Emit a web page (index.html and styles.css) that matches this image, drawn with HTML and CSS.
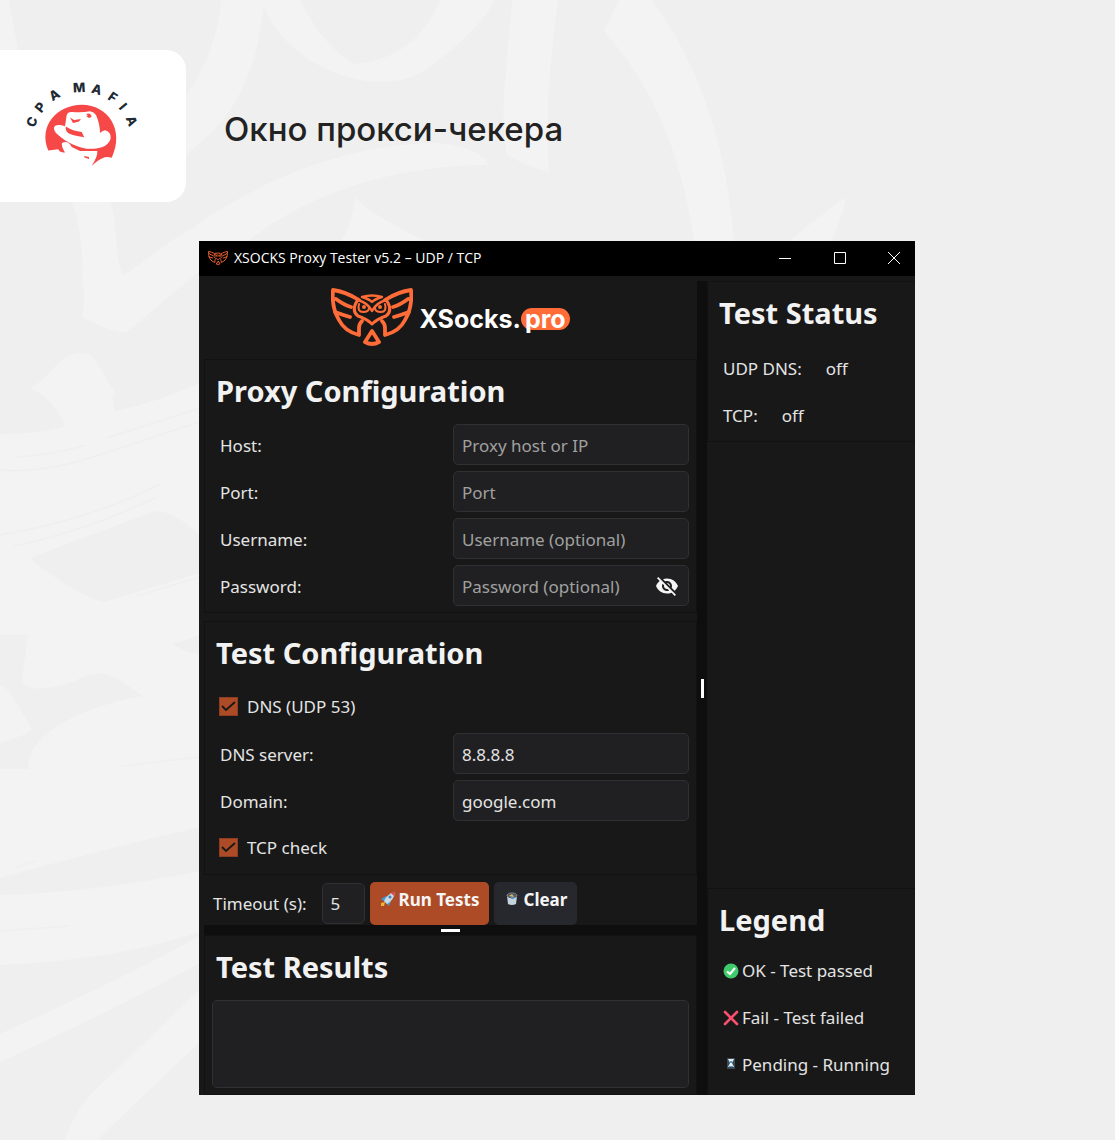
FILE: index.html
```html
<!DOCTYPE html>
<html lang="ru">
<head>
    <meta charset="UTF-8">
    <meta name="viewport" content="width=device-width, initial-scale=1.0">
    <title>Окно прокси-чекера</title>
    <link rel="stylesheet" href="styles.css">
</head>
<body>

    <svg class="backdrop" viewBox="0 0 1115 1140" preserveAspectRatio="xMinYMin slice" aria-hidden="true">
        <g fill="#f3f3f3">
            <path d="M0 0H9L18 50H0Z"/>
            <path d="M221 0H264C260 60 240 110 200 143L180 160V105C205 68 218 40 221 0Z"/>
            <path d="M264 7C280 50 330 78 375 82C395 82 412 79 425 70C455 50 485 20 495 0H440C425 35 400 60 355 64C335 54 315 30 300 0H262Z"/>
            <path d="M512 0H558C550 60 545 120 549 172Q535 170 507 155C498 115 509 50 512 0Z"/>
            <path d="M619 0H652C700 65 728 150 734 245H695C680 150 655 90 604 31Z"/>
            <path d="M196 225C270 175 350 145 433 143C460 144 482 152 489 165C400 165 310 190 243 245H196Z"/>
            <path d="M355 197Q370 215 433 245H339Q354 220 355 197Z"/>
            <path d="M845 199Q845 210 830 245H784Q815 220 842 199Z"/>
            <path d="M72 200H110C118 225 114 255 123 275C130 273 165 242 200 224V271L128 331Q120 336 82 317Q86 300 82 280C85 255 78 220 72 200Z"/>
            <path d="M32 387Q40 383 47 375Q72 345 92 356C103 368 108 385 116 393L113 397L115 411Q155 403 200 383V827Q100 850 0 878V769H28C28 730 90 705 143 696C110 672 100 668 75 681C55 687 28 695 22 680L28 635H0V434Q40 434 65 426Q50 395 32 390Z"/>
            <path d="M0 686Q10 689 13 697L32 729Q30 734 0 743Z"/>
            <path d="M0 895Q100 892 200 871V932Q110 961 0 965Z"/>
            <path d="M0 1034Q120 980 200 936V963Q110 1012 0 1062Z"/>
            <path d="M65 1140Q75 1105 110 1076L200 989V1042L97 1140Z"/>
        </g>
        <g fill="#efefef">
            <path d="M32 557L155 511Q175 511 200 536V573L105 602Q80 598 32 560Z"/>
            <path d="M173 644L200 635V654Q185 653 173 644Z"/>
        </g>
        <g fill="none" stroke="#efefef" stroke-width="1.5">
            <path d="M0 470C60 475 110 450 200 422M107 438L200 408M0 535Q90 520 160 484M14 546Q90 530 157 497M137 596L200 577M15 457Q55 455 85 445M122 766L200 757M0 931L70 926M17 867L35 861"/>
        </g>
    </svg>

    <header class="page-header">
        <div class="brand">
            <svg class="brand-logo" viewBox="0 0 116 90" role="img" aria-label="CPA Mafia">
                <g class="brand-arc">
                    <text x="58" y="12" transform="rotate(-69 58 61)">C</text>
                    <text x="58" y="12" transform="rotate(-51 58 61)">P</text>
                    <text x="58" y="12" transform="rotate(-31 58 61)">A</text>
                    <text x="58" y="12" transform="rotate(-3 58 61)">M</text>
                    <text x="58" y="12" transform="rotate(16 58 61)">A</text>
                    <text x="58" y="12" transform="rotate(35 58 61)">F</text>
                    <text x="58" y="12" transform="rotate(50 58 61)">I</text>
                    <text x="58" y="12" transform="rotate(68 58 61)">A</text>
                </g>
                <path fill="#f74848" d="M24.300 70.500C14 46 33 24.700 58 24.700C84 24.700 101 50 87.700 77.700Q82 76 79 78Q75 79 67.700 86Q74 76 73.300 71L56 71L47.700 67Q44 60 38 63Q37 66 41 72.500Q36 73 34.300 69.300Z"/>
                <path fill="#fff" d="M41 46.300L42.700 35Q44 31.500 48 32Q58 33 66 31.300Q70 32 72 35Q76 44 76 53Q78 51 81 50.300Q87 52 86.700 58C85 67 74 69.500 62.700 68.700C50 67 38 59 32 53C27 46 32 43 41 46.300Z"/>
                <path fill="#f74848" d="M41.700 46.500Q49 51 57.700 52L60.300 57.300Q51 56 46 54Q41 52 41.700 46.500ZM46 37.500L50 40L57 39L55 41.500L49 43ZM62 34Q67 32 67.500 37L65 38L62 36L64 35.500ZM60 76L65 77V79L60.500 77.500Z"/>
            </svg>
        </div>
        <h1>Окно прокси-чекера</h1>
    </header>

    <main class="window">
        <div class="titlebar">
            <svg class="titlebar-icon" viewBox="0 0 82 58" aria-hidden="true"><use href="#owl"/></svg>
            <span class="titlebar-text">XSOCKS Proxy Tester v5.2 – UDP / TCP</span>
            <button type="button" class="win-btn" aria-label="Minimize">
                <svg viewBox="0 0 14 14"><path d="M1 7.500H13"/></svg>
            </button>
            <button type="button" class="win-btn" aria-label="Maximize">
                <svg viewBox="0 0 14 14"><path d="M1.500 1.500H12.500V12.500H1.500Z"/></svg>
            </button>
            <button type="button" class="win-btn" aria-label="Close">
                <svg viewBox="0 0 14 14"><path d="M1 1L13 13M13 1L1 13"/></svg>
            </button>
        </div>

        <div class="panes">
            <div class="left">
                <div class="logo">
                    <svg class="owl" viewBox="0 0 82 58" aria-hidden="true">
                        <g id="owl" fill="none" stroke="#ff6c37" stroke-width="3.800" stroke-linecap="round" stroke-linejoin="round">
                            <path d="M28 12C20 7 10 3 2 2C1 13 3 24 8 32C12 40 20 45 28 47V40Q28 36 31 33M5 11Q13 17 20 19M4 24Q12 27 19 29"/>
                            <path d="M54 12C62 7 72 3 80 2C81 13 79 24 74 32C70 40 62 45 54 47V40Q54 36 51 33M77 11Q69 17 62 19M78 24Q70 27 63 29"/>
                            <path stroke-width="3" d="M26 13Q20 23 27 28Q36 31 41 36Q46 31 55 28Q62 23 56 13"/>
                            <path stroke-width="2.400" d="M27 12Q37 15 41 23Q45 15 55 12M31 9Q41 6 51 9Q44 11 41 14Q38 11 31 9Z"/>
                            <path stroke-width="2" d="M28 16Q26 24 32 24Q38 24 38 20M54 16Q56 24 50 24Q44 24 44 20"/>
                            <circle cx="33" cy="19" r="1" stroke-width="2"/>
                            <circle cx="49" cy="19" r="1" stroke-width="2"/>
                            <path d="M41 43L34 54Q41 58 48 54Z"/>
                        </g>
                    </svg>
                    <span class="logo-text">XSocks.<span class="pill">pro</span></span>
                </div>

                <section class="group">
                    <h2>Proxy Configuration</h2>
                    <div class="row">
                        <label for="host">Host:</label>
                        <input type="text" id="host" placeholder="Proxy host or IP">
                    </div>
                    <div class="row">
                        <label for="port">Port:</label>
                        <input type="text" id="port" placeholder="Port">
                    </div>
                    <div class="row">
                        <label for="username">Username:</label>
                        <input type="text" id="username" placeholder="Username (optional)">
                    </div>
                    <div class="row">
                        <label for="password">Password:</label>
                        <div class="password">
                            <input type="password" id="password" placeholder="Password (optional)">
                            <button type="button" class="eye" aria-label="Show password">
                                <svg viewBox="0 0 24 24"><path d="M12 7c2.760 0 5 2.240 5 5 0 .650-.130 1.260-.360 1.830l2.920 2.920c1.510-1.260 2.700-2.890 3.430-4.750-1.730-4.390-6-7.500-11-7.500-1.400 0-2.740.250-3.980.700l2.160 2.160C10.740 7.130 11.350 7 12 7zM2 4.270l2.280 2.280.460.460C3.080 8.300 1.780 10.020 1 12c1.730 4.390 6 7.500 11 7.500 1.550 0 3.030-.300 4.380-.840l.420.420L19.730 22 21 20.730 3.270 3 2 4.270zM7.530 9.800l1.550 1.550c-.050.210-.080.430-.080.650 0 1.660 1.340 3 3 3 .220 0 .440-.030.650-.080l1.550 1.550c-.670.330-1.410.530-2.200.530-2.760 0-5-2.240-5-5 0-.790.200-1.530.530-2.200zm4.310-.780l3.150 3.150.020-.160c0-1.660-1.340-3-3-3l-.170.010z"/></svg>
                            </button>
                        </div>
                    </div>
                </section>

                <section class="group test-config">
                    <h2>Test Configuration</h2>
                    <label class="check"><input type="checkbox" checked> DNS (UDP 53)</label>
                    <div class="row">
                        <label for="dnsServer">DNS server:</label>
                        <input type="text" id="dnsServer" value="8.8.8.8">
                    </div>
                    <div class="row">
                        <label for="domain">Domain:</label>
                        <input type="text" id="domain" value="google.com">
                    </div>
                    <label class="check"><input type="checkbox" checked> TCP check</label>
                </section>

                <div class="toolbar">
                    <label for="timeout">Timeout (s):</label>
                    <input type="text" id="timeout" value="5">
                    <button type="button" class="btn btn-run">
                        <svg viewBox="0 0 16 16">
                            <path fill="#f2b233" d="M1 12L5 11L4 15L1 15Z"/>
                            <path fill="#3d9ad6" d="M1 8L6 5L11 10L9 15L6 12L4 10Z"/>
                            <path fill="#c9dbe6" d="M4 10Q7 3 15 1Q14 9 7 13Z"/>
                            <path fill="#d8434e" d="M11 2L15 1L14 5Z"/>
                            <circle cx="10" cy="6" r="1.500" fill="#3d84bd"/>
                        </svg>
                        Run Tests
                    </button>
                    <button type="button" class="btn btn-clear">
                        <svg viewBox="0 0 16 16">
                            <path fill="#c6d3dc" d="M3 5H13L12 13Q8 15 4 13Z"/>
                            <ellipse cx="8" cy="5" rx="5" ry="2" fill="#56616b"/>
                            <path fill="#e0b64d" d="M5 5L8 3L10 6Z"/>
                            <path fill="#4a98cc" d="M7 6H10V8H7Z"/>
                            <path fill="none" stroke="#7e8d97" d="M3 5Q3 2 8 2T13 5"/>
                        </svg>
                        Clear
                    </button>
                </div>

                <div class="splitter splitter-h"></div>

                <section class="group results">
                    <h2>Test Results</h2>
                    <textarea aria-label="Test Results" readonly></textarea>
                </section>
            </div>

            <div class="splitter splitter-v"></div>

            <aside class="right">
                <section class="group">
                    <h2>Test Status</h2>
                    <p class="status"><span>UDP DNS:</span><span>off</span></p>
                    <p class="status"><span>TCP:</span><span>off</span></p>
                </section>
                <section class="group legend">
                    <h2>Legend</h2>
                    <ul>
                        <li>
                            <svg viewBox="0 0 16 16"><circle cx="8" cy="8" r="7.500" fill="#3fcb6c"/><path d="M4 8.500L7 11L12 5" fill="none" stroke="#fff" stroke-width="2.200"/></svg>
                            OK - Test passed
                        </li>
                        <li>
                            <svg viewBox="0 0 16 16"><path d="M2 2L14 14M14 2L2 14" stroke="#f8506e" stroke-width="2.600" stroke-linecap="round"/></svg>
                            Fail - Test failed
                        </li>
                        <li>
                            <svg viewBox="0 0 16 16"><path fill="#3c4852" d="M4 1H12V12H4Z"/><path fill="#e3edf3" d="M5 2H11L9 6L11 10H5L7 6Z"/><path fill="#4b9fd0" d="M7 4H9V6H7ZM6 9H10V10H6Z"/></svg>
                            Pending - Running
                        </li>
                    </ul>
                </section>
            </aside>
        </div>
    </main>

</body>
</html>
```
FILE: styles.css
```css
* {
    box-sizing: border-box;
}
body {
    margin: 0;
    padding: 50px 0 45px;
    background-color: #efefef;
    font-family: "Noto Sans", sans-serif;
}
.backdrop {
    position: absolute;
    top: 0;
    left: 0;
    width: 100%;
    height: 100%;
    z-index: -1;
}

/* Header */
.page-header {
    display: flex;
    align-items: center;
    gap: 38px;
    margin-bottom: 39px;
}
.brand {
    display: flex;
    justify-content: flex-end;
    width: 186px;
    padding: 30px 46px 32px 0;
    background-color: #fff;
    border-radius: 0 20px 20px 0;
}
.brand-logo {
    width: 116px;
    height: 90px;
    overflow: visible;
}
.brand-arc {
    font-family: Inter, sans-serif;
    font-size: 13px;
    font-weight: 800;
    fill: #1f2933;
    text-anchor: middle;
}
.page-header h1 {
    margin: 0;
    padding-top: 6px;
    font-family: Inter, sans-serif;
    font-size: 33px;
    font-weight: 500;
    line-height: 40px;
    color: #222;
}

/* Window */
.window {
    margin: 0 200px 0 199px;
    background-color: #181818;
    color: #e4e4e4;
    font-size: 17px;
}
.titlebar {
    display: flex;
    align-items: center;
    height: 35px;
    padding: 0 0 2px 9px;
    background-color: #000;
    color: #fff;
}
.titlebar-icon {
    width: 20px;
    height: 14px;
    margin-right: 6px;
}
.titlebar-text {
    flex: 1;
    font-family: "Open Sans", sans-serif;
    font-size: 14px;
}
.win-btn {
    display: flex;
    justify-content: center;
    width: 55px;
    padding: 0;
    border: 0;
    background: none;
}
.win-btn:last-child {
    width: 42px;
    margin-left: 6px;
}
.win-btn svg {
    width: 14px;
    height: 14px;
    fill: none;
    stroke: #fff;
}
.panes {
    display: grid;
    grid-template-columns: minmax(0, 1fr) 10px 208px;
    padding-top: 5px;
}
.left {
    display: flex;
    flex-direction: column;
    padding-left: 5px;
}

/* Logo */
.logo {
    display: flex;
    align-items: center;
    justify-content: center;
    gap: 6px;
    height: 78px;
    padding: 0 0 6px;
}
.owl {
    width: 82px;
    height: 58px;
}
.logo-text {
    display: flex;
    align-items: center;
    padding-top: 4px;
    font-family: Inter, sans-serif;
    font-size: 25px;
    font-weight: 700;
    line-height: 22px;
    color: #fff;
}
.pill {
    padding: 0 4px;
    border-radius: 11px;
    background-color: #ff6c37;
}

/* Groups and form rows */
.group {
    padding: 0 7px 6px;
    border: 1px solid #121212;
}
.group h2 {
    margin: 0;
    padding: 0 0 3px 4px;
    font-size: 29px;
    font-weight: 700;
    line-height: 61px;
    color: #f2f2f2;
}
.row {
    display: grid;
    grid-template-columns: minmax(0, 1fr) 236px;
    align-items: center;
    margin-bottom: 6px;
}
.row:last-child {
    margin-bottom: 0;
}
.row label {
    padding: 2px 0 0 8px;
}
input[type="text"],
input[type="password"],
textarea {
    width: 100%;
    height: 41px;
    padding: 2px 8px 0;
    border: 1px solid #303032;
    border-radius: 5px;
    background-color: #202022;
    color: #e4e4e4;
    font-family: inherit;
    font-size: 17px;
}
input::placeholder {
    color: #a0a0a0;
}
.password {
    position: relative;
}
.eye {
    position: absolute;
    top: 9px;
    right: 10px;
    width: 24px;
    height: 24px;
    padding: 0;
    border: 0;
    background: none;
}
.eye svg {
    display: block;
    fill: #f5f5f5;
}
.test-config {
    margin-top: 8px;
}
.check {
    display: flex;
    align-items: center;
    gap: 9px;
    height: 41px;
    margin-bottom: 6px;
    padding-left: 7px;
}
.check:last-child {
    margin-bottom: 0;
}
.check input {
    appearance: none;
    width: 19px;
    height: 19px;
    margin: 0;
    border: 1px solid #8d3e22;
    background: #ad4b27 url("data:image/svg+xml,%3Csvg xmlns='http://www.w3.org/2000/svg' viewBox='0 0 17 17'%3E%3Cpath d='M2 8l4 4 9-8' fill='none' stroke='%23181818' stroke-width='1.8'/%3E%3C/svg%3E");
}

/* Toolbar */
.toolbar {
    display: flex;
    align-items: center;
    gap: 5px;
    height: 44px;
    margin-top: 6px;
    padding-left: 9px;
}
.toolbar input[type="text"] {
    width: 43px;
    margin-left: 10px;
    padding-top: 0;
}
.btn {
    display: flex;
    align-items: center;
    gap: 3px;
    height: 43px;
    padding: 0 10px 8px;
    border: 0;
    border-radius: 5px;
    color: #f5f5f5;
    font-family: inherit;
    font-size: 17px;
    font-weight: 700;
}
.btn svg {
    width: 16px;
    height: 16px;
}
.btn-run {
    background-color: #ad4b27;
}
.btn-clear {
    background-color: #27282d;
}

/* Splitters */
.splitter {
    display: flex;
    align-items: center;
    justify-content: center;
    background-color: #0e0e0e;
}
.splitter::after {
    content: "";
    background-color: #fff;
}
.splitter-h {
    height: 10px;
}
.splitter-h::after {
    width: 19px;
    height: 3px;
}
.splitter-v::after {
    width: 3px;
    height: 19px;
}
.results {
    flex: 1;
}
.results textarea {
    display: block;
    height: 88px;
    resize: none;
}

/* Right pane */
.right {
    display: flex;
    flex-direction: column;
    justify-content: space-between;
}
.right .group {
    padding-bottom: 2px;
    border-right: 0;
}
.right h2 {
    padding-bottom: 2px;
}
.status,
.legend li {
    display: flex;
    align-items: center;
    margin: 0;
    padding-left: 8px;
}
.status {
    gap: 24px;
    height: 47px;
}
.right .legend {
    padding-bottom: 9px;
}
.legend h2 {
    padding-bottom: 0;
}
.legend ul {
    display: grid;
    gap: 6px;
    margin: 0;
    padding: 0;
    list-style: none;
}
.legend li {
    gap: 3px;
    height: 41px;
}
.legend svg {
    width: 16px;
    height: 16px;
}
```
